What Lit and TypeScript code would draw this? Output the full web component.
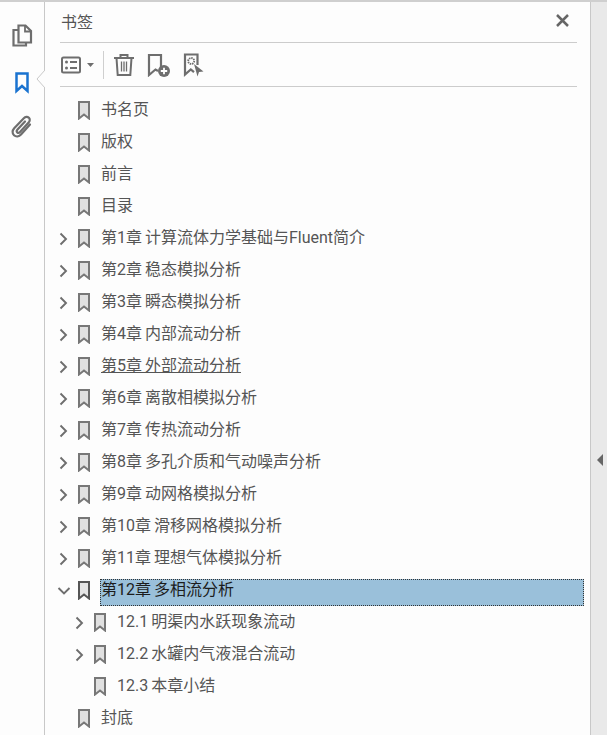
import { LitElement, html, css, svg } from "lit"
import { customElement } from "lit/decorators.js"

type Item = { label: string; depth?: number; open?: boolean; leaf?: boolean; selected?: boolean; link?: boolean }

const items: Item[] = [
  { label: "书名页", leaf: true },
  { label: "版权", leaf: true },
  { label: "前言", leaf: true },
  { label: "目录", leaf: true },
  { label: "第1章 计算流体力学基础与Fluent简介" },
  { label: "第2章 稳态模拟分析" },
  { label: "第3章 瞬态模拟分析" },
  { label: "第4章 内部流动分析" },
  { label: "第5章 外部流动分析", link: true },
  { label: "第6章 离散相模拟分析" },
  { label: "第7章 传热流动分析" },
  { label: "第8章 多孔介质和气动噪声分析" },
  { label: "第9章 动网格模拟分析" },
  { label: "第10章 滑移网格模拟分析" },
  { label: "第11章 理想气体模拟分析" },
  { label: "第12章 多相流分析", open: true, selected: true },
  { label: "12.1 明渠内水跃现象流动", depth: 1 },
  { label: "12.2 水罐内气液混合流动", depth: 1 },
  { label: "12.3 本章小结", depth: 1, leaf: true },
  { label: "封底", leaf: true },
]

const markIcon = svg`<path d="M1 1h10v16.500L6 13.500 1 17.500z" fill="#e0e0e0" stroke="#777" stroke-width="2" stroke-linejoin="miter"/>`

@customElement("app-root")
export class AppRoot extends LitElement {
  static styles = css`
    :host {
      display: block;
      height: 735px;
      overflow: hidden;
      font-family: Roboto, "Noto Sans CJK SC", sans-serif;
      color: #555;
      background: #fdfdfd;
    }

    .shell {
      display: flex;
      height: 733px;
      border-top: 2px solid #cfcfcf;
    }

    .rail {
      position: relative;
      flex: 0 0 45px;
      display: flex;
      flex-direction: column;
      align-items: center;
      padding-top: 22px;
      gap: 24px;
      box-sizing: border-box;
      border-right: 1px solid #c8c8c8;
    }

    .rail svg {
      display: block;
    }

    .rail .clip {
      margin-top: -3px;
    }

    .notch {
      position: absolute;
      right: -1px;
      top: 68px;
      width: 9px;
      height: 18px;
    }

    .panel {
      flex: 1;
      display: flex;
      flex-direction: column;
      min-width: 0;
      border-right: 1px solid #c8c8c8;
    }

    .head {
      display: flex;
      align-items: center;
      justify-content: space-between;
      height: 41px;
      box-sizing: border-box;
      margin: 0 13px 0 15px;
      padding: 0 8px 3px 1px;
      border-bottom: 1px solid #cccccc;
      font-size: 16px;
    }

    .tools {
      display: flex;
      align-items: center;
      height: 44px;
      box-sizing: border-box;
      margin: 0 13px 0 15px;
      border-bottom: 1px solid #cccccc;
      padding-left: 1px;
    }

    .tools svg {
      display: block;
    }

    .caret {
      margin-left: 6px;
    }

    .sep {
      width: 1px;
      height: 28px;
      background: #cfcfcf;
      margin: 0 9px 0 9px;
    }

    .tools .gap {
      margin-left: 12px;
    }

    .tools .gap-wide {
      margin-left: 13px;
    }

    .list {
      padding-top: 7px;
    }

    .row {
      display: flex;
      align-items: center;
      height: 32px;
      font-size: 16px;
      word-spacing: -1px;
      white-space: nowrap;
      padding-right: 6px;
    }

    .chev {
      flex: 0 0 14px;
      margin-left: 12px;
      margin-top: 2px;
      display: block;
    }

    .mark {
      flex: 0 0 12px;
      margin-left: 7px;
      display: block;
    }

    .label {
      flex: 1;
      margin-left: 10px;
      padding-left: 1px;
      line-height: 28px;
    }

    .link {
      text-decoration: underline;
    }

    .selected {
      align-self: flex-end;
      height: 27px;
      line-height: 22px;
      box-sizing: border-box;
      background: #9ac0da;
      color: #1c1c1c;
      outline: 1px dotted #333;
      outline-offset: -1px;
    }

    .selected-mark path {
      fill: #e4e4e4;
      stroke: #555;
    }

    .strip {
      flex: 0 0 16px;
      display: flex;
      align-items: center;
      justify-content: flex-end;
      background: #e9e9e9;
      padding-top: 183px;
      box-sizing: border-box;
    }

    .strip svg {
      display: block;
      margin-right: 4px;
    }
  `

  renderRow(item: Item) {
    const indent = (item.depth ?? 0) * 16
    return html`
      <div class="row" style="padding-left: ${indent}px">
        <svg class="chev" width="14" height="14" viewBox="0 0 14 14" fill="none" stroke="#6e6e6e" stroke-width="1.900">
          ${item.leaf
            ? ""
            : item.open
              ? svg`<path d="M1.500 4l5.500 5.500L12.500 4"/>`
              : svg`<path d="M3.500 1.500L9 7l-5.500 5.500"/>`}
        </svg>
        <svg class="mark ${item.selected ? "selected-mark" : ""}" width="12" height="19" viewBox="0 0 12 19">${markIcon}</svg>
        <div class="label ${item.selected ? "selected" : ""} ${item.link ? "link" : ""}">${item.label}</div>
      </div>
    `
  }

  render() {
    return html`
      <div class="shell">
        <div class="rail">
          <svg width="22" height="24" viewBox="0 0 22 24" fill="none" stroke="#6e6e6e" stroke-width="2.200">
            <path d="M7.500 6H2.500v15.500h12.500V18"/>
            <path d="M7.500 1.500h7l5.500 5.500v11.500H7.500z"/>
            <path d="M14 1.500V7.500h6" stroke-width="1.800"/>
          </svg>
          <svg width="16" height="22" viewBox="0 0 16 22" fill="none" stroke="#1a73d0" stroke-width="2.500">
            <path d="M2.500 1.500h11v17.500l-5.500-5-5.500 5z"/>
          </svg>
          <svg class="clip" width="22" height="24" viewBox="0 0 22 24" fill="none" stroke="#6e6e6e" stroke-width="2.200" stroke-linecap="round">
            <path d="M19 9.500L10 19.500c-2 2.200-5 2.500-7 .7-2-1.800-1.800-4.700.2-6.900L12.800 3.300c1.500-1.600 3.700-1.800 5-.6 1.400 1.200 1.200 3.300-.2 4.900L9 17c-.9 1-2 1.100-2.800.4-.7-.7-.6-1.800.3-2.800L14 6.500"/>
          </svg>
          <svg class="notch" viewBox="0 0 9 18" fill="#fdfdfd" stroke="#c8c8c8">
            <path d="M9 0L1 9l8 9"/>
          </svg>
        </div>
        <div class="panel">
          <div class="head">
            <span>书签</span>
            <svg width="13" height="13" viewBox="0 0 13 13" stroke="#666" stroke-width="2.500">
              <path d="M1 1l11 11M12 1L1 12"/>
            </svg>
          </div>
          <div class="tools">
            <svg width="20" height="18" viewBox="0 0 20 18" fill="none" stroke="#6e6e6e" stroke-width="2">
              <rect x="1" y="1.500" width="18" height="15" rx="1.500"/>
              <path d="M9 6h7M9 12h7"/>
              <circle cx="5.500" cy="6" r="1.500" fill="#6e6e6e" stroke="none"/>
              <circle cx="5.500" cy="12" r="1.500" fill="#6e6e6e" stroke="none"/>
            </svg>
            <svg class="caret" width="7" height="4" viewBox="0 0 7 4" fill="#6e6e6e"><path d="M0 0h7L3.500 4z"/></svg>
            <div class="sep"></div>
            <svg width="22" height="24" viewBox="0 0 22 24" fill="none" stroke="#6e6e6e" stroke-width="2">
              <path d="M1 5h20M7.500 5V2h7v3"/>
              <path d="M3.500 5l1.200 17h12.600l1.200-17"/>
              <path d="M8.500 8.500v10M11 8.500v10M13.500 8.500v10" stroke-width="1.300"/>
            </svg>
            <svg class="gap" width="23" height="24" viewBox="0 0 23 24" fill="none">
              <path d="M14 14V2H2v20l6.500-5.500L11 18" stroke="#6e6e6e" stroke-width="2.200"/>
              <circle cx="17" cy="18" r="6" fill="#6e6e6e"/>
              <path d="M13.800 18h6.400M17 14.800v6.400" stroke="#fff" stroke-width="1.800"/>
            </svg>
            <svg class="gap-wide" width="21" height="24" viewBox="0 0 21 24" fill="none">
              <path d="M14.500 12V1.500H2v20l5.800-5 3.200 2.700" stroke="#6e6e6e" stroke-width="2.200"/>
              <circle cx="8.200" cy="8" r="3" stroke="#6e6e6e" stroke-width="1.800" stroke-dasharray="1.500 .8"/>
              <path d="M11 11L20.500 18.500l-4.500.5-1.500 4.500z" fill="#6e6e6e"/>
            </svg>
          </div>
          <div class="list">${items.map((item) => this.renderRow(item))}</div>
        </div>
        <div class="strip">
          <svg width="6" height="12" viewBox="0 0 6 12" fill="#666"><path d="M6 0v12L0 6z"/></svg>
        </div>
      </div>
    `
  }
}
